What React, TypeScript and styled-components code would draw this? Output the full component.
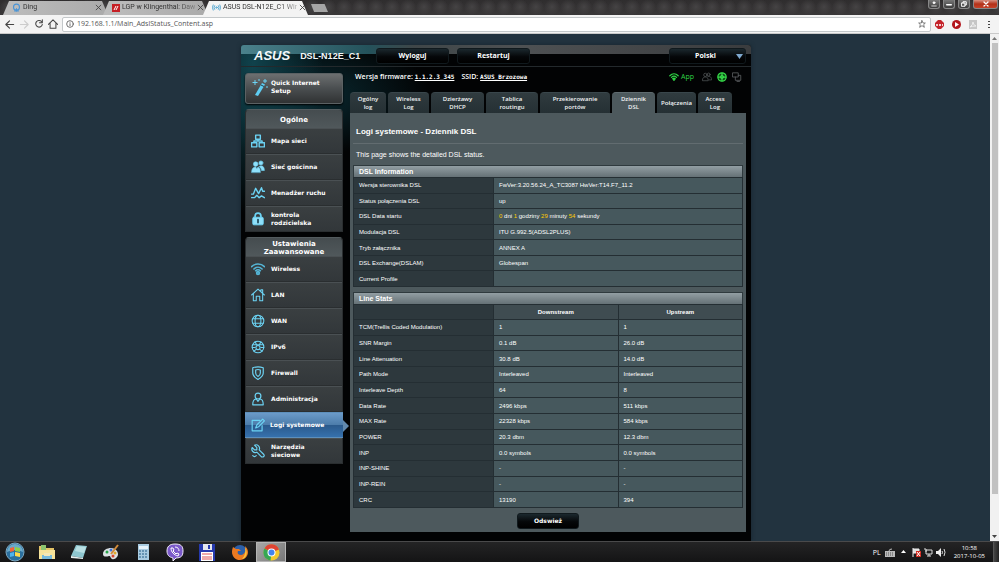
import React from "react";
import styled, { createGlobalStyle, css } from "styled-components";

const sans = `"Liberation Sans", Arial, sans-serif`;
const wide = `"DejaVu Sans", Verdana, sans-serif`;
const ui = `"Open Sans", "Noto Sans", sans-serif`;

const GlobalStyle = createGlobalStyle`
  *, *::before, *::after { box-sizing: border-box; }
  body { margin: 0; background: #22333f; font-family: ${sans}; }
  button, input, select { font: inherit; color: inherit; border: 0; padding: 0; margin: 0; background: none; }
  a { color: inherit; text-decoration: none; }
  h1, h2, p, ul { margin: 0; padding: 0; list-style: none; }
  svg { display: block; flex: none; }
`;

/* ---------- browser window ---------- */

const Screen = styled.div`
  display: flex;
  flex-direction: column;
  height: 100vh;
  overflow: hidden;
`;

const TabStrip = styled.header`
  display: flex;
  align-items: flex-end;
  flex: none;
  height: 15px;
  padding-left: 3px;
  background-image: radial-gradient(circle at 8px 7px, #454344, transparent 8px),
    linear-gradient(#2f2d2e, #3a3839);
  background-size: 16px 15px, 100% 100%;
`;

const BrowserTab = styled.div<{ $active?: boolean }>`
  display: flex;
  align-items: center;
  flex: 0 1 105px;
  min-width: 0;
  height: 15px;
  margin-right: -5px;
  padding: 0 6px 0 9px;
  gap: 2px;
  clip-path: polygon(6px 1px, calc(100% - 6px) 1px, 100% 100%, 0 100%);
  background: ${(p) => (p.$active ? "#f3f3f3" : "linear-gradient(90deg, #bdbdbd, #aaa)")};
  font: 7px/13px Roboto, sans-serif;
  color: #333;
`;

const TabTitle = styled.button`
  flex: 1;
  white-space: nowrap;
  text-align: left;
  mask-image: linear-gradient(90deg, #000 75%, rgba(0, 0, 0, 0.3));
`;

const IconButton = styled.button`
  display: flex;
  align-items: center;
  justify-content: center;
  flex: none;
`;

const NewTab = styled.button`
  width: 17px;
  height: 8px;
  margin: 0 0 3px 8px;
  background: #a5a5a5;
  clip-path: polygon(0 0, 80% 0, 100% 100%, 18% 100%);
`;

const WindowControls = styled.div`
  display: flex;
  align-self: flex-start;
  gap: 3px;
  height: 9px;
  margin-left: auto;
  padding-right: 1px;
`;

const WindowButton = styled.button<{ $danger?: boolean }>`
  display: grid;
  place-items: center;
  width: ${(p) => (p.$danger ? "25px" : "12px")};
  border: 1px solid #888;
  border-top: 0;
  border-radius: 0 0 3px 3px;
  background: ${(p) => (p.$danger ? "linear-gradient(#d89182, #b33119 50%, #c54229)" : "linear-gradient(#777, #3c3c3c)")};
`;

const Toolbar = styled.nav`
  display: flex;
  align-items: center;
  flex: none;
  height: 19px;
  padding: 0 6px 0 4px;
  gap: 4px;
  background: #f3f3f3;
  border-bottom: 1px solid #c9c9c9;
  color: #444;
`;

const AddressBar = styled.div`
  display: flex;
  align-items: center;
  flex: 1;
  gap: 3px;
  height: 15px;
  padding: 0 4px 0 3px;
  background: #fff;
  border: 1px solid #c4c8ca;
  border-radius: 2px;
`;

const Address = styled.input`
  flex: 1;
  min-width: 0;
  font: 7px/12px ${ui};
  color: #555;
  outline: none;
`;

const Extensions = styled.div`
  display: flex;
  align-items: center;
  gap: 8px;
`;

const Viewport = styled.div`
  display: flex;
  flex: 1;
  min-height: 0;
`;

const Page = styled.div`
  display: flex;
  justify-content: center;
  flex: 1;
  min-width: 0;
  padding: 11px 0 0 2px;
  background: #22333f;
  overflow: hidden;
`;

const ScrollTrack = styled.div`
  display: flex;
  flex-direction: column;
  align-items: center;
  width: 9px;
  flex: none;
  background: #f1f1f1;
`;

const ScrollArrow = styled.button`
  display: grid;
  place-items: center;
  width: 9px;
  height: 9px;
`;

const ScrollThumb = styled.div`
  width: 6px;
  flex: 0 0 89%;
  margin-bottom: auto;
  background: #c1c1c1;
`;

/* ---------- router page ---------- */

const Router = styled.div`
  display: flex;
  flex-direction: column;
  flex: 0 1 510px;
  min-width: 0;
  background:
    radial-gradient(ellipse 70px 150px at 12px 20px, #10424c, transparent),
    radial-gradient(ellipse 130px 60px at 60px 50px, #0a2d35, transparent),
    #020304;
  border-radius: 3px 3px 0 0;
  box-shadow: 0 0 4px #16232c;
`;

const RouterHeader = styled.header`
  display: flex;
  align-items: center;
  gap: 8px;
  flex: none;
  height: 22px;
  padding-right: 5px;
  border-bottom: 1px solid #23292c;
  border-radius: 3px 3px 0 0;
  background: linear-gradient(90deg, #4b828c, #24525b 25%, #3f4648 34%, #4e5153 55%, #3a3c3e) top / 100% 9px no-repeat;
`;

const Brand = styled.div`
  display: flex;
  align-items: center;
  gap: 10px;
  flex: 0 0 127px;
  padding-left: 13px;
  color: #f4f8f9;
  white-space: nowrap;
`;

const Logo = styled.span`
  font: italic 700 13px/14px ${sans};
`;

const Model = styled.span`
  font: 700 9px/14px ${sans};
`;

const darkButton = css`
  height: 16px;
  border: 1px solid #10191d;
  border-radius: 3px;
  background: linear-gradient(#1b282e, #050709 55%, #000);
  color: #fff;
`;

const HeaderButton = styled.button`
  ${darkButton}
  flex: 0 1 73px;
  font: 700 7px/14px ${ui};
`;

const LanguageBox = styled.label`
  position: relative;
  flex: 0 1 77px;
  margin-left: auto;
  svg {
    position: absolute;
    top: 6px;
    right: 3px;
    pointer-events: none;
  }
`;

const LanguageSelect = styled.select`
  ${darkButton}
  display: block;
  width: 100%;
  padding-right: 4px;
  appearance: none;
  text-align: center;
  text-align-last: center;
  font: 700 7px/14px ${ui};
`;

const RouterBody = styled.div`
  display: flex;
  flex: 1;
  gap: 7px;
  padding: 0 5px 0 4px;
`;

const Sidebar = styled.nav`
  display: flex;
  flex-direction: column;
  gap: 5px;
  flex: 0 0 98px;
  padding-top: 6px;
  font: 700 6px/8px ${wide};
  color: #fff;
`;

const QuickSetup = styled.a`
  display: flex;
  align-items: center;
  gap: 2px;
  flex: none;
  height: 31px;
  padding: 0 4px 4px 5px;
  border: 1px solid #5b6163;
  border-radius: 3px;
  background: linear-gradient(#6c6f70, #4a4e50 50%, #303233);
  box-shadow: 0 1px 2px #000;
`;

const MenuBlock = styled.section`
  border-radius: 4px 4px 0 0;
  border: 1px solid #2a2e30;
  border-top-color: #535b5e;
  border-bottom: 0;
  background: #363b3d;
`;

const MenuHeading = styled.h2`
  display: grid;
  place-items: center;
  height: 18px;
  padding-top: 2px;
  border-radius: 4px 4px 0 0;
  background: linear-gradient(#454c4f, #50585b);
  font: 700 7px/8px ${wide};
  text-align: center;
`;

const MenuLink = styled.a<{ $active?: boolean }>`
  position: relative;
  display: flex;
  align-items: center;
  gap: 6px;
  height: 26px;
  padding: 0 12px 0 5px;
  border-top: 1px solid #4a5053;
  border-bottom: 1px solid #2a2e30;
  background: linear-gradient(#3a3f41, #32373a);
  ${(p) =>
    p.$active &&
    css`
      margin: 0 -1px;
      padding-left: 6px;
      gap: 5px;
      border-color: #5d8fbb;
      background: linear-gradient(#6b9ac8, #4d7dab 48%, #2b5a8c 52%, #3671ad);
      &::after {
        content: "";
        position: absolute;
        left: 100%;
        top: 7px;
        border: 6px solid transparent;
        border-left-color: #6289ad;
        border-right: 0;
      }
    `}
`;

const Main = styled.main`
  flex: 1;
  min-width: 0;
`;

const StatusRow = styled.div`
  display: flex;
  align-items: center;
  gap: 7px;
  height: 19px;
  padding: 0 4px 0 5px;
  font: 600 7px/10px ${ui};
  color: #fff;
  white-space: nowrap;
`;

const StatusLink = styled.a`
  font: 700 6px/9px "DejaVu Sans Mono", monospace;
  text-decoration: underline;
`;

const StatusIcons = styled.div`
  display: flex;
  align-items: center;
  gap: 5px;
  margin-left: auto;
`;

const AppLink = styled.a`
  display: flex;
  align-items: center;
  gap: 2px;
  margin-right: 3px;
  color: #2fd445;
  font: 400 7px/10px ${ui};
`;

const Tabs = styled.div`
  display: flex;
  gap: 2px;
  padding-top: 6px;
`;

const Tab = styled.button<{ $width: number; $active?: boolean }>`
  display: grid;
  place-items: center;
  flex: 0 1 ${(p) => p.$width}px;
  height: 21px;
  border-radius: 4px 4px 0 0;
  background: ${(p) => (p.$active ? "#4d595d" : "linear-gradient(#303b3f, #253034)")};
  border-top: 1px solid ${(p) => (p.$active ? "#5f6b6f" : "#39464b")};
  color: #f2f4f5;
  font: 600 6px/8px ${ui};
`;

const TabLabel = styled.span`
  width: min-content;
`;

const Panel = styled.section`
  padding: 11px 3px 3px;
  background: #4d595d;
  color: #fff;
`;

const Title = styled.h1`
  padding: 1px 3px 4px;
  font: 700 8px/14px ${sans};
`;

const Intro = styled.p`
  padding: 6px 3px 5px;
  border-top: 1px solid #626c70;
  font: 7px/10px ${sans};
`;

const DataTable = styled.table<{ $min: number }>`
  width: 100%;
  height: ${(p) => p.$min}px;
  margin-bottom: 5px;
  table-layout: fixed;
  border-collapse: collapse;
  font: 6px/8px ${sans};
  caption {
    height: 12px;
    padding-left: 5px;
    border: 1px solid #2f3a3e;
    border-bottom: 0;
    background: linear-gradient(#929ea3, #657176);
    font: 700 7px/11px ${sans};
    text-align: left;
  }
  th, td {
    padding: 0 5px;
    border: 1px solid #242e33;
    font-weight: 400;
    text-align: left;
  }
  td { background: #46585d; }
  tbody th { background: #2d383d; }
  thead th { height: 15px; background: #3f4c51; font-weight: 700; text-align: center; }
  thead td { background: #2d383d; }
`;

const Col = styled.col<{ $share: number }>`
  width: ${(p) => p.$share}%;
`;

const Num = styled.span`
  color: #fc0;
`;

const RefreshButton = styled.button`
  ${darkButton}
  display: block;
  width: 62px;
  margin: 0 auto;
  font: 700 6px/14px ${wide};
`;

/* ---------- taskbar ---------- */

const Taskbar = styled.footer`
  display: flex;
  align-items: center;
  flex: none;
  height: 21px;
  border-top: 1px solid #4a4a4b;
  background: linear-gradient(#242425, #141415);
  color: #fff;
  font: 7px/9px ${ui};
`;

const TaskButton = styled.button<{ $active?: boolean }>`
  display: grid;
  place-items: center;
  width: 30px;
  height: 20px;
  margin-right: 2px;
  flex: none;
  ${(p) =>
    p.$active &&
    css`
      border: 1px solid #b5b5b5;
      background: linear-gradient(135deg, #a8a8a8, #777);
    `}
`;

const Tray = styled.div`
  display: flex;
  align-items: center;
  gap: 3px;
  margin-left: auto;
`;

const Language = styled.span`
  margin-right: 1px;
`;

const Clock = styled.time`
  margin: 0 5px;
  text-align: center;
  font: 6px/8px ${ui};
`;

const ShowDesktop = styled.button`
  width: 6px;
  height: 20px;
  border-left: 1px solid #555;
  background: linear-gradient(90deg, #444, #222);
`;

/* ---------- icons ---------- */

type IconProps = { size?: number; color?: string; width?: number; children: React.ReactNode };

const Icon = ({ size = 14, color = "#6cd3f4", width = 1.6, children }: IconProps) => (
  <svg width={size} height={size} viewBox="0 0 24 24" fill="none" stroke={color} strokeWidth={width} strokeLinecap="round" strokeLinejoin="round" aria-hidden="true">
    {children}
  </svg>
);

const Close = () => (
  <Icon size={7} color="#444" width={3}><path d="M4 4 20 20M20 4 4 20" /></Icon>
);

const people = (
  <>
    <circle cx="8" cy="7" r="4" />
    <circle cx="16" cy="6" r="3.5" />
    <path d="M1 20c0-6 3-8 7-8s7 2 7 8zM14 11c5-2 9 1 9 8h-6" />
  </>
);

const menuIcons: Record<string, React.ReactNode> = {
  map: <Icon width={2.4}><path d="M8 2h8v7H8zM1 15h9v7H1zM14 15h9v7h-9zM12 9v3M5 15v-3h14v3" /></Icon>,
  guest: (
    <Icon width={1}>
      <g fill="#8fe0fa">
        <circle cx="8" cy="7" r="4" /><circle cx="17" cy="5" r="3.5" />
        <path d="M1 21c0-6 3-9 7-9l2 3 2-3c3 1 4 4 4 9zM14 11l3-1c4 0 6 3 6 8h-5c0-3-2-5-4-7" />
      </g>
    </Icon>
  ),
  traffic: <Icon width={2.4}><path d="M1 14h3l4-10 5 9 5-10 2 6h3M1 20h5l4-4 4 4 4-3 5 3" /></Icon>,
  lock: (
    <Icon>
      <path d="M7 10V7a5 5 0 0 1 10 0v3" strokeWidth="3" />
      <rect x="3" y="9" width="18" height="13" rx="2" fill="#8fe0fa" />
      <path d="M12 13v5" stroke="#1d4858" strokeWidth="3" />
    </Icon>
  ),
  wifi: (
    <Icon width={2.8} color="#55b4d4">
      <path d="M1 8c6-6 16-6 22 0M5 12c4-4 10-4 14 0M8 15c2-2 6-2 8 0" />
      <circle cx="12" cy="19" r="2.4" fill="#3d93b1" />
    </Icon>
  ),
  home: <Icon width={1.8}><path d="M1 12 12 2l11 10M17 6V3h3v6M4 10v12h5v-8h6v8h5V10" /></Icon>,
  globe: (
    <Icon width={1.8}>
      <circle cx="12" cy="12" r="10" /><ellipse cx="12" cy="12" rx="5" ry="10" />
      <path d="M3 8h18M3 16h18" />
    </Icon>
  ),
  ipv6: (
    <Icon width={1.8}>
      <circle cx="12" cy="12" r="10" /><circle cx="12" cy="13" r="3.5" />
      <path d="M3 8h18M7 13H2M22 13h-5M5 19l4-3M19 19l-4-3M7 3l3 6M17 3l-3 6" />
    </Icon>
  ),
  shield: <Icon width={2}><path d="M3 3q9-3 18 0v9c0 5-4 8-9 11-5-3-9-6-9-11z" /><path d="M8 7q4-2 8 0v5c0 3-2 5-4 6-2-1-4-3-4-6z" /></Icon>,
  admin: <Icon width={2}><circle cx="12" cy="7" r="5" /><path d="M3 22c0-7 3-10 6-10l3 4 3-4c3 0 6 3 6 10z" /></Icon>,
  log: <Icon width={2}><path d="M19 13v9H2V4h13M8 17l2-5L20 2l3 3-10 10z" /></Icon>,
  tools: (
    <Icon width={2}>
      <path d="M6 2a6 6 0 0 1 8 8l8 8c2 3-1 5-4 4l-8-8A6 6 0 0 1 2 6l4 4h4V6z" />
      <path d="M3 20q3 3 6 0" />
    </Icon>
  ),
};

const Wand = () => (
  <svg width="18" height="18" viewBox="0 0 18 18" aria-hidden="true">
    <path d="M4 17 11 5l3 1.500L7 18z" fill="#5ecdf2" />
    <path d="m10 7 3 1.500" stroke="#23424d" strokeWidth="1" />
    <path d="M4 2v5M1.500 4.500h5M14 1v4M12 3h4M8 1v2M16 8v2" stroke="#6ad4f6" strokeWidth="1" />
  </svg>
);

/* ---------- data ---------- */

const general: [string, string][] = [
  ["map", "Mapa sieci"],
  ["guest", "Sieć gościnna"],
  ["traffic", "Menadżer ruchu"],
  ["lock", "kontrola rodzicielska"],
];

const advanced: [string, string][] = [
  ["wifi", "Wireless"],
  ["home", "LAN"],
  ["globe", "WAN"],
  ["ipv6", "IPv6"],
  ["shield", "Firewall"],
  ["admin", "Administracja"],
  ["log", "Logi systemowe"],
  ["tools", "Narzędzia sieciowe"],
];

const tabs: [string, number][] = [
  ["Ogólny log", 36],
  ["Wireless Log", 41],
  ["Dzierżawy DHCP", 53],
  ["Tablica routingu", 52],
  ["Przekierowanie portów", 70],
  ["Dziennik DSL", 43],
  ["Połączenia", 39],
  ["Access Log", 34],
];

const info: [string, React.ReactNode][] = [
  ["Wersja sterownika DSL", "FwVer:3.20.56.24_A_TC3087 HwVer:T14.F7_11.2"],
  ["Status połączenia DSL", "up"],
  ["DSL Data startu", <><Num>0</Num> dni <Num>1</Num> godziny <Num>29</Num> minuty <Num>54</Num> sekundy</>],
  ["Modulacja DSL", "ITU G.992.5(ADSL2PLUS)"],
  ["Tryb załącznika", "ANNEX A"],
  ["DSL Exchange(DSLAM)", "Globespan"],
  ["Current Profile", ""],
];

const stats = [
  ["TCM(Trellis Coded Modulation)", "1", "1"],
  ["SNR Margin", "0.1 dB", "26.0 dB"],
  ["Line Attenuation", "30.8 dB", "14.0 dB"],
  ["Path Mode", "Interleaved", "Interleaved"],
  ["Interleave Depth", "64", "8"],
  ["Data Rate", "2496 kbps", "511 kbps"],
  ["MAX Rate", "22328 kbps", "584 kbps"],
  ["POWER", "20.3 dbm", "12.3 dbm"],
  ["INP", "0.0 symbols", "0.0 symbols"],
  ["INP-SHINE", "-", "-"],
  ["INP-REIN", "-", "-"],
  ["CRC", "13190", "394"],
];

const apps: [string, React.ReactNode][] = [
  ["Start", (
    <svg width="20" height="20" viewBox="0 0 20 20">
      <circle cx="10" cy="10" r="9" fill="#2b6f9e" stroke="#7da7bf" />
      <path d="M2 10a8 8 0 0 1 16 0q-8-4-16 0" fill="#6ba9c9" />
      <path d="m5 6 4-1v4L5 10z" fill="#f0643a" /><path d="m10 5 5 1v4l-5-1z" fill="#8ecf4a" />
      <path d="m5 11 4-1v4l-4 1z" fill="#4fb4ee" /><path d="m10 10 5 1v4l-5-1z" fill="#ffd84a" />
    </svg>
  )],
  ["Eksplorator", (
    <svg width="18" height="16" viewBox="0 0 18 16">
      <path d="M1 2h6l1 2h8v10H1z" fill="#e5c466" /><path d="M3 1h5v5H3z" fill="#8dc46f" />
      <path d="M1 6h16v9H1z" fill="#f6e39b" /><path d="M4 11h10v4H4z" fill="#77b9dc" /><path d="M6 9h6v3H6z" fill="#f3e7b9" />
    </svg>
  )],
  ["Notatnik", (
    <svg width="18" height="16" viewBox="0 0 18 16">
      <path d="m6 1 11 1-4 12L1 12z" fill="#8ec6cf" /><path d="m7 2 9 1-2 6-9-2z" fill="#b9e0e4" /><path d="m1 12 12 2v1L1 14z" fill="#e9f1f1" />
    </svg>
  )],
  ["Paint", (
    <svg width="18" height="17" viewBox="0 0 18 17">
      <path d="M1 10c0-4 4-6 8-6s7 3 7 6-3 6-6 5c-2-1-1-3-3-3-3 1-6 1-6-2" fill="#dbe1e4" />
      <circle cx="5" cy="8" r="1.500" fill="#2aa54a" /><circle cx="9" cy="6" r="1.500" fill="#3f74d8" /><circle cx="13" cy="9" r="1.500" fill="#e0a92a" /><circle cx="11" cy="12" r="1.500" fill="#d6452d" />
      <path d="m9 10 7-9" stroke="#d18a3a" strokeWidth="2" />
    </svg>
  )],
  ["Kalkulator", (
    <svg width="13" height="16" viewBox="0 0 13 16">
      <path d="M1 0h11v16H1z" fill="#a9cbe0" /><path d="M2 2h9v3H2z" fill="#e7f3fa" />
      <path d="M2 7h9M2 10h9M2 13h9" stroke="#6794b3" strokeWidth="2" strokeDasharray="2 1" />
    </svg>
  )],
  ["Viber", (
    <svg width="18" height="18" viewBox="0 0 18 18">
      <path d="M9 1c6 0 8 2 8 7s-2 7-7 7l-3 3v-3c-4-1-6-3-6-7s2-7 8-7" fill="#7b59c9" stroke="#f1ecfa" strokeWidth="1" />
      <path d="M5 5c0 4 3 7 7 8l1-2-2-1-1 1-3-3 1-1-1-2zM9 4c3 0 4 2 4 4" fill="none" stroke="#fff" strokeWidth="1" />
    </svg>
  )],
  ["Total Commander", (
    <svg width="16" height="17" viewBox="0 0 16 17">
      <path d="M0 0h16v17H0z" fill="#2639ad" /><path d="M4 0h9v6H4z" fill="#e4e6ee" /><path d="M9 1h2v4H9z" fill="#2639ad" />
      <path d="M2 8h12v9H2z" fill="#fff" /><path d="M3 10h10M3 13h10M3 15h10" stroke="#d55" />
    </svg>
  )],
  ["Firefox", (
    <svg width="17" height="17" viewBox="0 0 17 17">
      <circle cx="9" cy="8" r="7" fill="#2d5fa8" />
      <path d="M2 3c-3 7 1 13 7 13 5 0 8-4 8-8 0-3-2-5-3-6 1 3 1 8-4 9-3 0-4-2-3-4h3L8 5 5 5z" fill="#ec7a22" />
      <path d="M14 3c3 5 2 11-3 12 3-3 4-7 3-12" fill="#f9c63c" />
    </svg>
  )],
  ["Chrome", (
    <svg width="17" height="17" viewBox="0 0 17 17">
      <circle cx="8.500" cy="8.500" r="8" fill="#f4c92c" />
      <path d="M8.500 8.500 1.500 4.500a8 8 0 0 1 14.500 1z" fill="#df4434" />
      <path d="M8.500 8.500 1.500 4.500a8 8 0 0 0 6 12z" fill="#36a753" />
      <circle cx="8.500" cy="8.500" r="4" fill="#fff" /><circle cx="8.500" cy="8.500" r="3" fill="#4384ee" />
    </svg>
  )],
];

const Menu = ({ title, items }: { title: string; items: [string, string][] }) => (
  <MenuBlock>
    <MenuHeading>{title}</MenuHeading>
    {items.map(([icon, label]) => (
      <MenuLink key={label} href="#" $active={icon === "log"}>
        {menuIcons[icon]}
        {label}
      </MenuLink>
    ))}
  </MenuBlock>
);

export default function App() {
  return (
    <Screen>
      <GlobalStyle />
      <TabStrip>
        <BrowserTab>
          <Icon size={9} color="#4b95d6" width={3}><circle cx="12" cy="11" r="8" /><path d="M12 15v7M7 21h10" /></Icon>
          <TabTitle>Ding</TabTitle>
          <IconButton aria-label="Zamknij kartę"><Close /></IconButton>
        </BrowserTab>
        <BrowserTab>
          <svg width="8" height="8" viewBox="0 0 8 8"><path d="M0 0h8v8H0z" fill="#c51f25" /><path d="m2 6 2-4M4 6l2-4" stroke="#fff" /></svg>
          <TabTitle>LGP w Klingenthal: Daw</TabTitle>
          <IconButton aria-label="Zamknij kartę"><Close /></IconButton>
        </BrowserTab>
        <BrowserTab $active>
          <Icon size={9} color="#4ea3cf" width={2.5}><circle cx="12" cy="12" r="2" /><path d="M7 7q-4 5 0 10M17 7q4 5 0 10M3 5q-4 7 0 14M21 5q4 7 0 14" /></Icon>
          <TabTitle>ASUS DSL-N12E_C1 Wir</TabTitle>
          <IconButton aria-label="Zamknij kartę"><Close /></IconButton>
        </BrowserTab>
        <NewTab aria-label="Nowa karta" />
        <WindowControls>
          <WindowButton aria-label="Profil"><Icon size={6} color="#fff" width={3}><circle cx="12" cy="7" r="4" fill="#fff" /><path d="M3 20h18" /></Icon></WindowButton>
          <WindowButton aria-label="Minimalizuj"><Icon size={6} color="#fff" width={6}><path d="M3 15h18" /></Icon></WindowButton>
          <WindowButton aria-label="Przywróć"><Icon size={6} color="#fff" width={4}><path d="M3 8h13v13H3zM8 8V3h13v13h-5" /></Icon></WindowButton>
          <WindowButton aria-label="Zamknij" $danger><Icon size={6} color="#fff" width={5}><path d="M4 4 20 20M20 4 4 20" /></Icon></WindowButton>
        </WindowControls>
      </TabStrip>

      <Toolbar>
        <IconButton aria-label="Wstecz"><Icon size={11} color="#444" width={2.5}><path d="M21 12H4M12 4l-8 8 8 8" /></Icon></IconButton>
        <IconButton aria-label="Dalej"><Icon size={11} color="#ccc" width={2.5}><path d="M3 12h17M12 4l8 8-8 8" /></Icon></IconButton>
        <IconButton aria-label="Odśwież stronę"><Icon size={10} color="#444" width={2.5}><path d="M20 13a8 8 0 1 1-2-7l2 2M20 2v7h-7" /></Icon></IconButton>
        <IconButton aria-label="Strona główna"><Icon size={10} color="#444" width={2.5}><path d="M1 13 12 2l11 11M5 10v12h14V10" /></Icon></IconButton>
        <AddressBar>
          <Icon size={8} color="#555" width={2.5}><circle cx="12" cy="12" r="10" /><path d="M12 11v6M12 7v0" /></Icon>
          <Address aria-label="Adres" defaultValue="192.168.1.1/Main_AdslStatus_Content.asp" />
          <IconButton aria-label="Dodaj zakładkę"><Icon size={8} color="#444" width={2}><path d="m12 2 3 7h7l-5 5 2 8-7-5-7 5 2-8-5-5h7z" /></Icon></IconButton>
        </AddressBar>
        <Extensions>
          <IconButton aria-label="Adblock Plus"><svg width="9" height="9" viewBox="0 0 9 9"><path d="M3 0h3l3 3v3L6 9H3L0 6V3z" fill="#c4242b" /><path d="M1 5h7" stroke="#f4d0d0" strokeWidth="2" strokeDasharray="2 1" /></svg></IconButton>
          <IconButton aria-label="Odtwarzacz"><svg width="9" height="9" viewBox="0 0 9 9"><circle cx="4.500" cy="4.500" r="4.500" fill="#b3161d" /><path d="M3 2v5l4-2.500z" fill="#fff" /></svg></IconButton>
          <IconButton aria-label="PDF"><svg width="8" height="9" viewBox="0 0 8 9"><path d="M0 0h8v9H0z" fill="#c6c6c6" /><path d="M1 7q3-2 3-5 0 3 3 4-4 0-6 1" fill="none" stroke="#eee" /></svg></IconButton>
          <IconButton aria-label="Menu"><svg width="8" height="9" viewBox="0 0 8 9"><path d="M3 1h2v1H3zM3 4h2v1H3zM3 7h2v1H3z" fill="#444" /></svg></IconButton>
        </Extensions>
      </Toolbar>

      <Viewport>
        <Page>
          <Router>
            <RouterHeader>
              <Brand><Logo>ASUS</Logo><Model>DSL-N12E_C1</Model></Brand>
              <HeaderButton>Wyloguj</HeaderButton>
              <HeaderButton>Restartuj</HeaderButton>
              <LanguageBox>
                <LanguageSelect aria-label="Język"><option>Polski</option></LanguageSelect>
                <svg width="7" height="5" viewBox="0 0 7 5"><path d="M0 0h7L3.500 5z" fill="#7fa9cf" /></svg>
              </LanguageBox>
            </RouterHeader>
            <RouterBody>
              <Sidebar>
                <QuickSetup href="#"><Wand />Quick Internet Setup</QuickSetup>
                <Menu title="Ogólne" items={general} />
                <Menu title="Ustawienia Zaawansowane" items={advanced} />
              </Sidebar>
              <Main>
                <StatusRow>
                  <span>Wersja firmware: <StatusLink href="#">1.1.2.3_345</StatusLink></span>
                  <span>SSID: <StatusLink href="#">ASUS_Brzozowa</StatusLink></span>
                  <StatusIcons>
                    <AppLink href="#">
                      <Icon size={10} color="#2fd445" width={3}><path d="M2 9c6-6 14-6 20 0M6 13c4-4 8-4 12 0" /><path d="m9 16 3 4 3-4q-3-2-6 0" fill="#2fd445" /></Icon>
                      App
                    </AppLink>
                    <Icon size={10} color="#5b5f61">{people}</Icon>
                    <Icon size={10} color="#37dc4a" width={3}><circle cx="12" cy="12" r="10" fill="#0f4a18" /><path d="M12 3v18M3 12h18" strokeWidth="3" /><circle cx="12" cy="12" r="4" strokeWidth="2" /></Icon>
                    <Icon size={10} color="#5b5f61" width={2}><path d="M2 2h13v10H2zM8 12v8h13V8h-6M12 23h6" /></Icon>
                  </StatusIcons>
                </StatusRow>
                <Tabs role="tablist">
                  {tabs.map(([label, width]) => (
                    <Tab key={label} role="tab" aria-selected={label === "Dziennik DSL"} $width={width} $active={label === "Dziennik DSL"}>
                      <TabLabel>{label}</TabLabel>
                    </Tab>
                  ))}
                </Tabs>
                <Panel>
                  <Title>Logi systemowe - Dziennik DSL</Title>
                  <Intro>This page shows the detailed DSL status.</Intro>
                  <DataTable $min={110}>
                    <caption>DSL Information</caption>
                    <colgroup><Col $share={36} /><Col $share={64} /></colgroup>
                    <tbody>
                      {info.map(([label, value]) => (
                        <tr key={label}><th scope="row">{label}</th><td>{value}</td></tr>
                      ))}
                    </tbody>
                  </DataTable>
                  <DataTable $min={204}>
                    <caption>Line Stats</caption>
                    <colgroup><Col $share={36} /><Col $share={32} /><Col $share={32} /></colgroup>
                    <thead>
                      <tr><td /><th scope="col">Downstream</th><th scope="col">Upstream</th></tr>
                    </thead>
                    <tbody>
                      {stats.map(([label, down, up]) => (
                        <tr key={label}><th scope="row">{label}</th><td>{down}</td><td>{up}</td></tr>
                      ))}
                    </tbody>
                  </DataTable>
                  <RefreshButton>Odswież</RefreshButton>
                </Panel>
              </Main>
            </RouterBody>
          </Router>
        </Page>
        <ScrollTrack>
          <ScrollArrow aria-label="Przewiń w górę"><svg width="5" height="3" viewBox="0 0 5 3"><path d="M0 3h5L2.500 0z" fill="#777" /></svg></ScrollArrow>
          <ScrollThumb />
          <ScrollArrow aria-label="Przewiń w dół"><svg width="5" height="3" viewBox="0 0 5 3"><path d="M0 0h5L2.500 3z" fill="#444" /></svg></ScrollArrow>
        </ScrollTrack>
      </Viewport>

      <Taskbar>
        {apps.map(([name, icon]) => (
          <TaskButton key={name} aria-label={name} $active={name === "Chrome"}>{icon}</TaskButton>
        ))}
        <Tray>
          <Language>PL</Language>
          <svg width="10" height="9" viewBox="0 0 10 9"><path d="M0 3h10v6H0z" fill="#bbb" /><path d="M1 5h8M1 7h8" stroke="#555" strokeDasharray="1 1" /><path d="M4 3q0-2 3-2" fill="none" stroke="#bbb" /></svg>
          <IconButton aria-label="Pokaż ukryte ikony"><svg width="11" height="4" viewBox="0 0 11 4"><path d="M3 3h5L5.500 0z" fill="#fff" /></svg></IconButton>
          <svg width="9" height="9" viewBox="0 0 9 9"><path d="M1 0v9M1 1h6v4H1" stroke="#eee" fill="#ddd" /><path d="M4 3h5v6H4z" fill="#d2281e" /><path d="m5 4 3 4M8 4 5 8" stroke="#fff" /></svg>
          <svg width="9" height="9" viewBox="0 0 9 9"><path d="M2 2h6v4H2zM0 1h2v3M5 6v2M3 8h4" fill="none" stroke="#ddd" /></svg>
          <svg width="10" height="9" viewBox="0 0 10 9"><path d="M0 3h2l3-3v9L2 6H0z" fill="#eee" /><path d="M6 3q1 1 0 3M8 1q2 3 0 7" fill="none" stroke="#ddd" /></svg>
          <Clock dateTime="2017-10-05T10:58">10:58<br />2017-10-05</Clock>
          <ShowDesktop aria-label="Pokaż pulpit" />
        </Tray>
      </Taskbar>
    </Screen>
  );
}
